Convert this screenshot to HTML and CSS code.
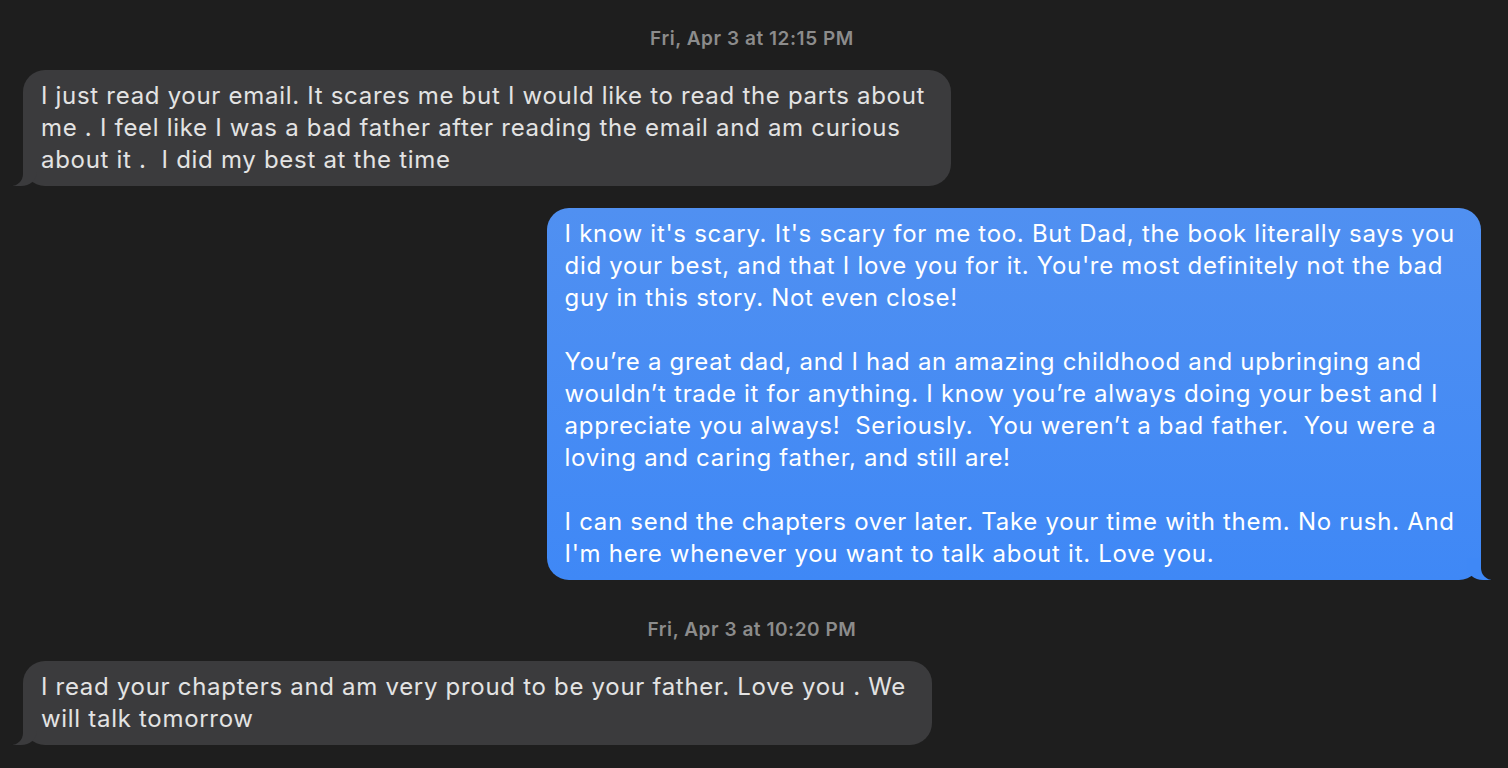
FILE: index.html
```html
<!DOCTYPE html>
<html lang="en">
<head>
<meta charset="utf-8">
<title>Messages</title>
<link rel="stylesheet" href="styles.css">
</head>
<body>
<main class="thread">
  <div class="stamp">Fri, Apr 3 at 12:15 PM</div>
  <div class="row them">
    <div class="bubble gray">I just read your email. It scares me but I would like to read the parts about<br>me . I feel like I was a bad father after reading the email and am curious<br>about it .&nbsp; I did my best at the time</div>
  </div>
  <div class="row me">
    <div class="bubble blue">I know it's scary. It's scary for me too. But Dad, the book literally says you<br>did your best, and that I love you for it. You're most definitely not the bad<br>guy in this story. Not even close!<br><br>You’re a great dad, and I had an amazing childhood and upbringing and<br>wouldn’t trade it for anything. I know you’re always doing your best and I<br>appreciate you always!&nbsp; Seriously.&nbsp; You weren’t a bad father.&nbsp; You were a<br>loving and caring father, and still are!<br><br>I can send the chapters over later. Take your time with them. No rush. And<br>I'm here whenever you want to talk about it. Love you.</div>
  </div>
  <div class="stamp stamp-second">Fri, Apr 3 at 10:20 PM</div>
  <div class="row them">
    <div class="bubble gray">I read your chapters and am very proud to be your father. Love you . We<br>will talk tomorrow</div>
  </div>
</main>
</body>
</html>
```

FILE: styles.css
```css
html, body {
  margin: 0;
  padding: 0;
  background: #1e1e1e;
  height: 100%;
}

body {
  font-family: Inter, "Noto Sans", sans-serif;
  -webkit-font-smoothing: antialiased;
  overflow: hidden;
}

.thread {
  display: flex;
  flex-direction: column;
  padding: 29px 27px 0 23px;
}

.stamp {
  text-align: center;
  font-size: 19px;
  line-height: 20px;
  font-weight: 600;
  letter-spacing: 0.55px;
  color: #8c8c8c;
  margin-bottom: 21px;
}

.stamp-second {
  margin-top: 40px;
}

.row {
  display: flex;
}

.row.them {
  justify-content: flex-start;
}

.row.me {
  justify-content: flex-end;
  margin-top: 22px;
}

.bubble {
  position: relative;
  font-size: 24px;
  line-height: 32px;
  letter-spacing: 0.7px;
  padding: 10px 26px 10px 18px;
  border-radius: 22px;
  white-space: nowrap;
}

.bubble.gray {
  background: #3b3b3d;
  color: #e3e3e3;
}

.bubble.blue {
  background: linear-gradient(#5090f1, #3f88f6);
  color: #ffffff;
}

/* tails */
.bubble::before,
.bubble::after {
  content: "";
  position: absolute;
  bottom: 0;
  height: 22px;
}

.gray::before {
  left: -10px;
  width: 24px;
  background: #3b3b3d;
  border-bottom-right-radius: 16px 14px;
}

.gray::after {
  left: -24px;
  width: 24px;
  background: #1e1e1e;
  border-bottom-right-radius: 12px;
}

.blue::before {
  right: -10px;
  width: 24px;
  background: #3f88f6;
  border-bottom-left-radius: 16px 14px;
}

.blue::after {
  right: -24px;
  width: 24px;
  background: #1e1e1e;
  border-bottom-left-radius: 12px;
}
```
